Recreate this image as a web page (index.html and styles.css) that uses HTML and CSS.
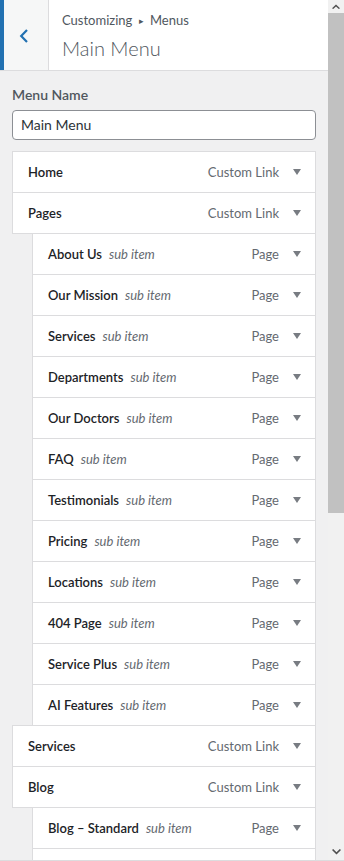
FILE: index.html
```html
<!DOCTYPE html>
<html lang="en">
<head>
<meta charset="utf-8">
<title>Customizing Menus</title>
<link rel="stylesheet" href="styles.css">
</head>
<body>
<div class="frame">
  <div class="panel">
    <header class="header">
      <button class="back" aria-label="Back">
        <svg width="10" height="14" viewBox="0 0 10 14"><path d="M8 1 L2.2 7 L8 13" fill="none" stroke="#2271b1" stroke-width="2.2"/></svg>
      </button>
      <div class="head-text">
        <div class="crumbs">Customizing <span class="sep">&#9656;</span> Menus</div>
        <div class="title">Main Menu</div>
      </div>
    </header>
    <section class="body">
      <label class="label">Menu Name</label>
      <div class="input">Main Menu</div>
      <ul class="items">
        <li class="item"><span class="name">Home</span><span class="type">Custom Link</span><span class="toggle"><i class="tri"></i></span></li>
        <li class="item"><span class="name">Pages</span><span class="type">Custom Link</span><span class="toggle"><i class="tri"></i></span></li>
        <li class="item sub"><span class="name">About Us</span><em class="subtag">sub item</em><span class="type">Page</span><span class="toggle"><i class="tri"></i></span></li>
        <li class="item sub"><span class="name">Our Mission</span><em class="subtag">sub item</em><span class="type">Page</span><span class="toggle"><i class="tri"></i></span></li>
        <li class="item sub"><span class="name">Services</span><em class="subtag">sub item</em><span class="type">Page</span><span class="toggle"><i class="tri"></i></span></li>
        <li class="item sub"><span class="name">Departments</span><em class="subtag">sub item</em><span class="type">Page</span><span class="toggle"><i class="tri"></i></span></li>
        <li class="item sub"><span class="name">Our Doctors</span><em class="subtag">sub item</em><span class="type">Page</span><span class="toggle"><i class="tri"></i></span></li>
        <li class="item sub"><span class="name">FAQ</span><em class="subtag">sub item</em><span class="type">Page</span><span class="toggle"><i class="tri"></i></span></li>
        <li class="item sub"><span class="name">Testimonials</span><em class="subtag">sub item</em><span class="type">Page</span><span class="toggle"><i class="tri"></i></span></li>
        <li class="item sub"><span class="name">Pricing</span><em class="subtag">sub item</em><span class="type">Page</span><span class="toggle"><i class="tri"></i></span></li>
        <li class="item sub"><span class="name">Locations</span><em class="subtag">sub item</em><span class="type">Page</span><span class="toggle"><i class="tri"></i></span></li>
        <li class="item sub"><span class="name">404 Page</span><em class="subtag">sub item</em><span class="type">Page</span><span class="toggle"><i class="tri"></i></span></li>
        <li class="item sub"><span class="name">Service Plus</span><em class="subtag">sub item</em><span class="type">Page</span><span class="toggle"><i class="tri"></i></span></li>
        <li class="item sub"><span class="name">AI Features</span><em class="subtag">sub item</em><span class="type">Page</span><span class="toggle"><i class="tri"></i></span></li>
        <li class="item"><span class="name">Services</span><span class="type">Custom Link</span><span class="toggle"><i class="tri"></i></span></li>
        <li class="item"><span class="name">Blog</span><span class="type">Custom Link</span><span class="toggle"><i class="tri"></i></span></li>
        <li class="item sub"><span class="name">Blog – Standard</span><em class="subtag">sub item</em><span class="type">Page</span><span class="toggle"><i class="tri"></i></span></li>
        <li class="item sub" aria-hidden="true"></li>
      </ul>
    </section>
  </div>
  <div class="scrollbar">
    <div class="sb-up"><svg width="8" height="5" viewBox="0 0 8 5"><path d="M0 4.2 L4 0.5 L8 4.2 L6.8 5 L4 2.4 L1.2 5 Z" fill="#505050"/></svg></div>
    <div class="sb-thumb"></div>
    <div class="sb-track"></div>
    <div class="sb-down"><svg width="9" height="6" viewBox="0 0 9 6"><path d="M0 1 L4.5 5.5 L9 1 L7.8 0 L4.5 3.2 L1.2 0 Z" fill="#505050"/></svg></div>
  </div>
</div>
</body>
</html>
```

FILE: styles.css
```css
* { box-sizing: border-box; }
html, body { margin: 0; padding: 0; }
body {
  background: #f0f0f1;
  font-family: "Lato", "Open Sans", sans-serif;
  color: #1d2327;
  overflow: hidden;
  height: 861px;
}
.frame {
  display: flex;
  height: 861px;
  border-bottom: 1px solid #dcdcde;
}
.panel {
  width: 328px;
  flex: none;
  overflow: hidden;
  display: flex;
  flex-direction: column;
}
.header {
  height: 71px;
  flex: none;
  display: flex;
  background: #fff;
  border-bottom: 1px solid #dcdcde;
}
.back {
  width: 49px;
  height: 70px;
  padding: 0;
  margin: 0;
  border: 0;
  border-left: 4px solid #2271b1;
  border-right: 1px solid #dcdcde;
  background: #f6f7f7;
  display: flex;
  align-items: center;
  justify-content: center;
  padding-right: 4px;
  padding-top: 1px;
}
.head-text {
  padding: 11px 0 0 13px;
}
.crumbs {
  font-size: 13px;
  line-height: 18px;
  color: #50575e;
}
.sep { font-size: 9px; vertical-align: 1px; margin: 0 3px; }
.title {
  font-size: 20px;
  line-height: 28px;
  font-weight: 300;
  color: #50575e;
  margin-top: 4px;
}
.body {
  padding: 14px 12px 0 12px;
}
.label {
  display: block;
  font-size: 14px;
  font-weight: 600;
  line-height: 20px;
  color: #50575e;
  margin-bottom: 5px;
}
.input {
  height: 30px;
  border: 1px solid #8c8f94;
  border-radius: 4px;
  background: #fff;
  font-size: 14px;
  line-height: 28px;
  padding: 0 8px;
  color: #2c3338;
}
.items {
  list-style: none;
  margin: 11px 0 0 0;
  padding: 0;
}
.item {
  height: 42px;
  margin-top: -1px;
  border: 1px solid #dcdcde;
  background: #fff;
  display: flex;
  align-items: center;
  padding-left: 15px;
  font-size: 13px;
}
.item:first-child { margin-top: 0; }
.item.sub { margin-left: 20px; }
.name { font-weight: 600; color: #1d2327; white-space: nowrap; }
.subtag { font-style: italic; color: #646970; margin-left: 7px; white-space: nowrap; }
.type { margin-left: auto; color: #646970; white-space: nowrap; }
.toggle {
  width: 36px;
  height: 100%;
  display: flex;
  align-items: center;
  justify-content: center;
  flex: none;
}
.tri {
  width: 0; height: 0;
  border-left: 4px solid transparent;
  border-right: 4px solid transparent;
  border-top: 6px solid #787c82;
}
.scrollbar {
  width: 16px;
  flex: none;
  background: #f1f1f1;
  display: flex;
  flex-direction: column;
}
.sb-up {
  height: 13px;
  display: flex;
  justify-content: center;
  align-items: center;
}
.sb-thumb {
  height: 500px;
  background: #c1c1c1;
}
.sb-track { flex: 1; }
.sb-down {
  height: 16px;
  display: flex;
  justify-content: center;
  align-items: center;
}
```
